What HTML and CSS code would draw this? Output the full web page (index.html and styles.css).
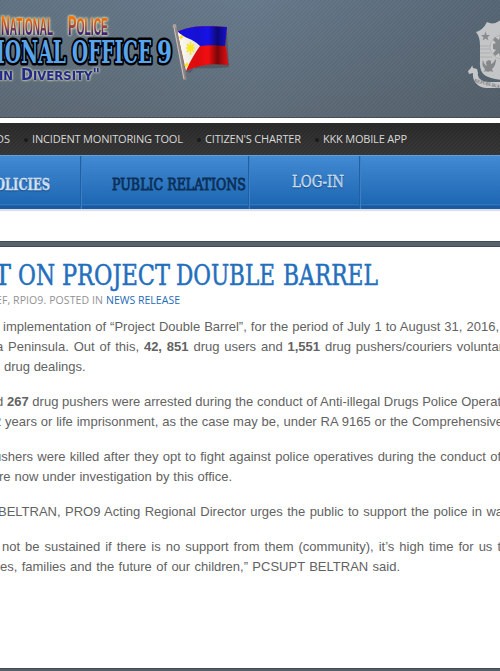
FILE: index.html
```html
<!DOCTYPE html>
<html lang="en">
<head>
<meta charset="utf-8">
<title>Report on Project Double Barrel</title>
<link rel="stylesheet" href="styles.css">
</head>
<body>
<header class="banner">
<svg class="brand" width="240" height="100" viewBox="0 0 240 100">
  <defs>
    <linearGradient id="fire" gradientUnits="userSpaceOnUse" x1="0" y1="15" x2="0" y2="35"><stop offset=".1" stop-color="#ff7a00"/><stop offset=".55" stop-color="#a8483f"/><stop offset=".9" stop-color="#3c2279"/></linearGradient>
    <linearGradient id="fold"><stop offset="0" stop-color="#000" stop-opacity="0"/><stop offset=".4" stop-color="#000" stop-opacity=".1"/><stop offset=".6" stop-color="#000" stop-opacity="0"/><stop offset=".78" stop-color="#000" stop-opacity=".5"/><stop offset="1" stop-color="#000" stop-opacity="0"/></linearGradient>
  </defs>
  <g class="agency">
    <text x="1" y="35" textLength="52" lengthAdjust="spacingAndGlyphs"><tspan font-size="28">N</tspan><tspan font-size="23">ATIONAL</tspan></text>
    <text x="68" y="35" textLength="40" lengthAdjust="spacingAndGlyphs"><tspan font-size="28">P</tspan><tspan font-size="23">OLICE</tspan></text>
  </g>
  <g class="office">
    <text x="-4" y="63" textLength="70" lengthAdjust="spacingAndGlyphs">IONAL</text>
    <text x="72" y="63" textLength="80" lengthAdjust="spacingAndGlyphs">OFFICE</text>
    <text x="157" y="63" textLength="15" lengthAdjust="spacingAndGlyphs">9</text>
  </g>
  <g class="motto">
    <text x="-1" y="80" font-size="13" textLength="14" lengthAdjust="spacingAndGlyphs">IN</text>
    <text x="21" y="80" textLength="79" lengthAdjust="spacingAndGlyphs"><tspan font-size="16">D</tspan><tspan font-size="13">IVERSITY</tspan><tspan font-size="16">"</tspan></text>
  </g>
  <path d="M186 71C199 66 203 70 229 67L227 32 190 73Z" fill="#454d54" opacity=".6"/>
  <path d="M177 32C191 25 206 26 227 27L225 45C229 54 226 61 229 65 211 63 199 65 186 71Z" fill="#f40d10"/>
  <path d="M177 32C191 25 206 26 227 27L225 46C214 45 208 45 200 46Z" fill="#1712e8"/>
  <path d="M177 31C184 39 193 38 200 46 195 53 190 61 186 71Z" fill="#fffdf4"/>
  <path d="M177 32C191 25 206 26 227 27L225 45 229 65C211 63 199 65 186 71Z" fill="url(#fold)"/>
  <g stroke="#f4e51c" stroke-width="1.500"><path d="M186 48h9M190.500 42v13M187 44l7 8M194 44l-7 8"/></g>
  <circle cx="190.500" cy="48" r="3" fill="#f9ea20"/>
  <path d="M181 34l1 2 2 1-2 1-1 2-1-2-1-1 2-1ZM187 62l1 2 1 1-2 1-1 2-1-2-1-1 2-1Z" fill="#f4e51c"/>
  <path d="M175 27L185 80" stroke="#8d8584" stroke-width="3.500"/><path d="M174 27L184 79" stroke="#c9c2bf" stroke-width="1"/><circle cx="174.500" cy="26" r="2" fill="#aaa09d"/>
</svg>
<svg class="seal" width="34" height="75" viewBox="0 0 34 75">
  <path d="M10 13Q17 11 21 3Q28 7 36 0V61C20 59 13 56 14 42V26Q14 18 10 13Z" fill="#c4c5c6"/>
  <path d="M14 27h11M14 30h10M14 34h10M14 38h12" stroke="#aeb0b1"/>
  <circle cx="36" cy="28" r="12" fill="#c9caca" stroke="#aaa" stroke-width=".7"/>
  <path d="M36 17h-2l-1 4-4-3-2 3 3 3-3 1v5l3 1-3 3 2 3 4-3 1 4h2Z" fill="#888b8d"/>
  <path d="M19.500 12.500l1.200 3.500h3.300l-2.500 2.200 1 3.300-3-1.900-3 1.900 1-3.300-2.500-2.200h3.300Z" fill="#888b8d"/>
  <path d="M34 4v4h2v-6Z" fill="#888b8d"/>
  <path d="M17 41q1 5 4 6-2-4 0-5l2-1 2 1v3l2-1q1-2 3-4 0 7-4 10l1 3-3-1-2 1-2-1-2 1 1-3q-4-4-2-9Z" fill="#85888a"/>
  <path d="M6 47l-2 3-2 2 1 3 4-1c-1 8 5 15 14 15h15v-6H23c-7 0-12-4-11-9l-1-4-4-1-1-3Z" fill="#c6c7c8"/>
  <text class="ribbon" x="8" y="63" transform="rotate(14 8 63)" textLength="26" lengthAdjust="spacingAndGlyphs">REPUBLIKA</text>
</svg>
</header>
<nav class="topnav">
  <svg width="500" height="32">
    <text x="-4" y="20" textLength="14">DS</text>
    <text x="32" y="20" textLength="151">INCIDENT MONITORING TOOL</text>
    <text x="205" y="20" textLength="96">CITIZEN'S CHARTER</text>
    <text x="323" y="20" textLength="84">KKK MOBILE APP</text>
    <g fill="#1b1b1b"><circle cx="26" cy="17" r="2"/><circle cx="199" cy="17" r="2"/><circle cx="317" cy="17" r="2"/></g>
  </svg>
</nav>
<nav class="mainnav">
  <div class="tab policies"><svg width="81" height="48"><text class="strong" x="-5" y="34" textLength="55" lengthAdjust="spacingAndGlyphs">OLICIES</text></svg></div>
  <div class="tab relations"><svg width="168" height="48"><text class="active" x="31" y="34" textLength="134" lengthAdjust="spacingAndGlyphs">PUBLIC RELATIONS</text></svg></div>
  <div class="tab login"><svg width="110" height="48"><text x="43" y="31" textLength="52" lengthAdjust="spacingAndGlyphs">LOG-IN</text></svg></div>
</nav>
<div class="rule"></div>
<main>
  <h1><svg width="500" height="42"><text x="-6" y="38" textLength="17" lengthAdjust="spacingAndGlyphs">T</text><text x="18" y="38" textLength="37" lengthAdjust="spacingAndGlyphs">ON</text><text x="62" y="38" textLength="108" lengthAdjust="spacingAndGlyphs">PROJECT</text><text x="176" y="38" textLength="99" lengthAdjust="spacingAndGlyphs">DOUBLE</text><text x="283" y="38" textLength="95" lengthAdjust="spacingAndGlyphs">BARREL</text></svg></h1>
  <div class="meta"><svg width="300" height="20"><text x="-4" y="15" textLength="107">EF, RPIO9. POSTED IN</text><text class="link" x="106" y="15" textLength="74">NEWS RELEASE</text></svg></div>
  <article>
    <p><span class="l1">implementation of “Project Double Barrel”, for the period of July 1 to August 31, 2016,</span>
    <span class="l2">a Peninsula. Out of this, <b>42, 851</b> drug users and <b>1,551</b> drug pushers/couriers voluntar</span>
    <span class="l3">drug dealings.</span></p>
    <p><span class="l4">d <b>267</b> drug pushers were arrested during the conduct of Anti-illegal Drugs Police Operat</span>
    <span class="l5">2 years or life imprisonment, as the case may be, under RA 9165 or the Comprehensive</span></p>
    <p><span class="l6">ushers were killed after they opt to fight against police operatives during the conduct of</span>
    <span class="l7">re now under investigation by this office.</span></p>
    <p><span class="l8">BELTRAN, PRO9 Acting Regional Director urges the public to support the police in wa</span></p>
    <p><span class="l9">not be sustained if there is no support from them (community), it’s high time for us t</span>
    <span class="l10">es, families and the future of our children,” PCSUPT BELTRAN said.</span></p>
  </article>
</main>
<div class="foot"></div>
</body>
</html>
```
FILE: styles.css
```css
* { box-sizing: border-box; }
body { margin: 0; width: 500px; height: 671px; overflow: hidden; background: #fff; font-family: "Liberation Sans", Arial, sans-serif; }
svg { display: block; overflow: visible; }
.banner {
  height: 118px; display: flex; justify-content: space-between; border-bottom: 1px solid #454d59;
  background: linear-gradient(135deg, rgba(0,0,0,.045) 25%, transparent 25% 50%, rgba(0,0,0,.045) 50% 75%, transparent 75%) 0 0 / 4px 4px,
    linear-gradient(90deg, rgba(86,99,110,.3), rgba(100,118,134,.1) 50%, rgba(70,80,90,.45)),
    linear-gradient(#697d8f, #616f7a);
}
.seal { margin-top: 19px; overflow: hidden; }
.agency { font-family: "Liberation Sans Narrow", "Liberation Sans", sans-serif; font-weight: bold; fill: url(#fire); filter: drop-shadow(0 0 1px #e5dfac) drop-shadow(0 0 1px #d8d6b0); }
.office { font: bold 32px "DejaVu Serif Condensed", "DejaVu Serif", serif; fill: #58a5ee; stroke: #000; stroke-width: 5px; stroke-linejoin: round; paint-order: stroke; }
.motto { font-family: "DejaVu Sans", sans-serif; font-weight: bold; fill: #22298c; filter: drop-shadow(0 0 1px #d5d8b5) drop-shadow(0 0 1px #b9c0a8); }
.ribbon { font: bold 5px "Liberation Serif", serif; fill: #777; }
.topnav {
  margin-top: 5px; height: 32px; font: 11px "Open Sans", sans-serif;
  background: linear-gradient(135deg, rgba(0,0,0,.1) 25%, transparent 25% 50%, rgba(0,0,0,.1) 50% 75%, transparent 75%) 0 0 / 4px 4px, linear-gradient(#2c2c2c, #3a3a3a);
}
.topnav text { fill: #d8d8d8; }
.mainnav { height: 54px; display: flex; border-top: 1px solid #63a0da; background: linear-gradient(#428ad2, #1e67b3 48px, #2e74ba 48px 49px, #17589f 50px, #1c5ca5); box-shadow: 0 2px 1px #dedee9; font: 16px "DejaVu Serif Condensed", "DejaVu Serif", serif; }
.tab { border-right: 1px solid #1e5fa5; box-shadow: 1px 0 #3b7fc4; }
.policies { width: 81px; }
.relations { width: 168px; }
.login { width: 111px; }
.mainnav text { fill: #e0efff; stroke: #e0efff; stroke-width: .3px; text-shadow: 0 1px 1px #174b83; }
.mainnav .strong { font-weight: bold; }
.mainnav .active { fill: #0b3058; stroke: #0b3058; stroke-width: .8px; text-shadow: none; }
.rule { height: 6px; margin-top: 32px; border: solid #414c54; border-width: 1px 0; background: #56636b; }
main { height: 421px; }
h1 { margin: 0; height: 42px; font: 28px "DejaVu Serif Condensed", "DejaVu Serif", serif; fill: #246fbd; stroke: #246fbd; stroke-width: .5px; }
.meta { height: 20px; font: 10.5px "Open Sans", sans-serif; fill: #929292; }
.meta .link { fill: #246bb5; }
article { padding-top: 8px; color: #626262; font-size: 13px; line-height: 20px; }
p { margin: 0 0 15px; }
p span { display: block; white-space: nowrap; text-align-last: justify; }
.l1 { margin-left: 3px; width: 496px; }
.l2 { margin-left: -4px; width: 507px; }
.l3 { margin-left: 4px; width: 80px; }
.l4 { margin-left: -4px; width: 505px; }
.l5 { margin-left: -6px; width: 509px; }
.l6 { margin-left: -6px; width: 507px; }
.l7 { margin-left: -1px; width: 233px; }
.l8 { margin-left: -2px; width: 505px; }
.l9 { margin-left: 2px; width: 499px; }
.l10 { width: 400px; }
.foot { height: 3px; border-top: 1px solid #414c54; background: #535e68; }
```
